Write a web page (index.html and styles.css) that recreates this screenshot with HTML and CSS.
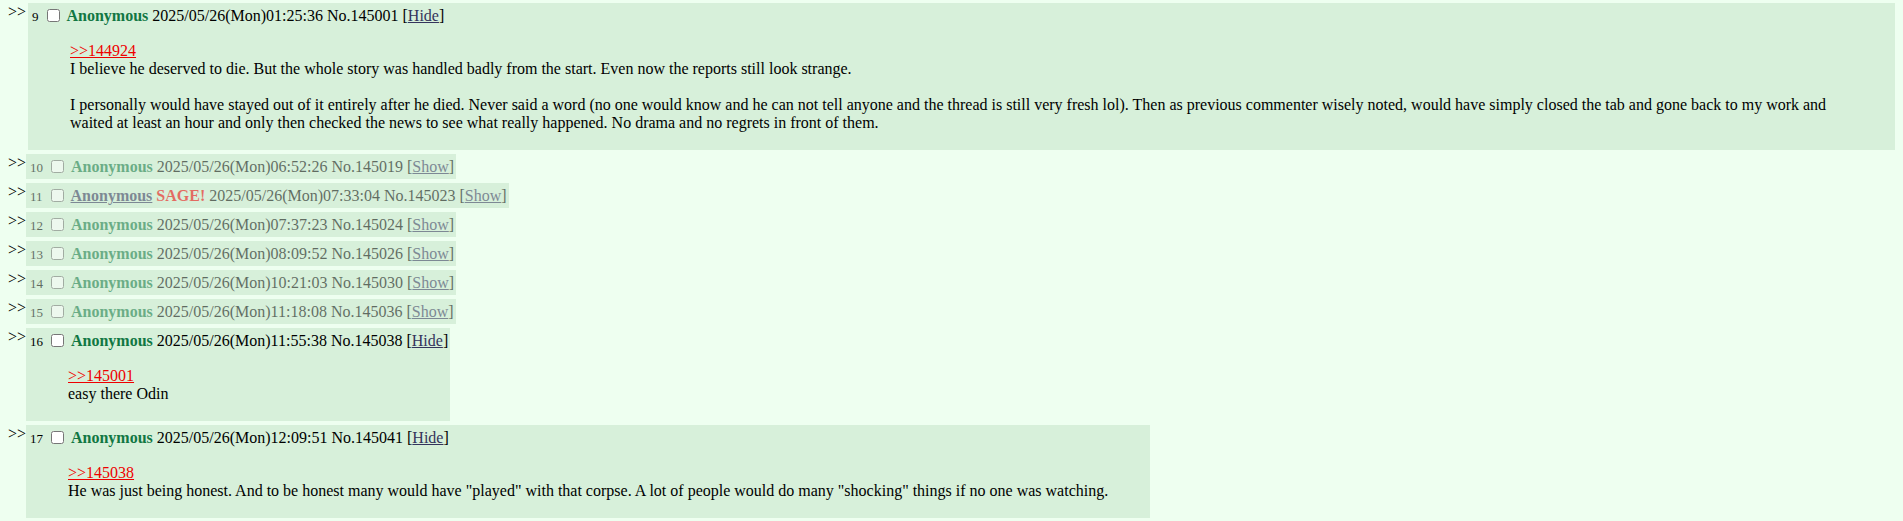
FILE: index.html
```html
<!DOCTYPE html>
<html lang="en">
<head>
    <meta charset="UTF-8">
    <title>Thread</title>
    <link rel="stylesheet" href="styles.css">
</head>
<body>
    <div class="thread">
        <div class="row first">
            <div class="mark">&gt;&gt;</div>
            <div class="reply">
                <div class="head"><span class="num">9</span> <input type="checkbox"> <span class="name">Anonymous</span> 2025/05/26(Mon)01:25:36 No.145001 [<a href="#">Hide</a>]</div>
                <blockquote>
                    <a class="quote" href="#">&gt;&gt;144924</a><br>
                    I believe he deserved to die. But the whole story was handled badly from the start. Even now the reports still look strange.<br>
                    <br>
                    I personally would have stayed out of it entirely after he died. Never said a word (no one would know and he can not tell anyone and the thread is still very fresh lol). Then as previous commenter wisely noted, would have simply closed the tab and gone back to my work
                    and waited at least an hour and only then checked the news to see what really happened. No drama and no regrets in front of them.
                </blockquote>
            </div>
        </div>
        <div class="row">
            <div class="mark">&gt;&gt;</div>
            <div class="reply hidden">
                <div class="head"><span class="num">10</span> <input type="checkbox"> <span class="name">Anonymous</span> 2025/05/26(Mon)06:52:26 No.145019 [<a href="#">Show</a>]</div>
            </div>
        </div>
        <div class="row">
            <div class="mark">&gt;&gt;</div>
            <div class="reply hidden">
                <div class="head"><span class="num">11</span> <input type="checkbox"> <a class="name mail" href="#">Anonymous</a> <span class="sage">SAGE!</span> 2025/05/26(Mon)07:33:04 No.145023 [<a href="#">Show</a>]</div>
            </div>
        </div>
        <div class="row">
            <div class="mark">&gt;&gt;</div>
            <div class="reply hidden">
                <div class="head"><span class="num">12</span> <input type="checkbox"> <span class="name">Anonymous</span> 2025/05/26(Mon)07:37:23 No.145024 [<a href="#">Show</a>]</div>
            </div>
        </div>
        <div class="row">
            <div class="mark">&gt;&gt;</div>
            <div class="reply hidden">
                <div class="head"><span class="num">13</span> <input type="checkbox"> <span class="name">Anonymous</span> 2025/05/26(Mon)08:09:52 No.145026 [<a href="#">Show</a>]</div>
            </div>
        </div>
        <div class="row">
            <div class="mark">&gt;&gt;</div>
            <div class="reply hidden">
                <div class="head"><span class="num">14</span> <input type="checkbox"> <span class="name">Anonymous</span> 2025/05/26(Mon)10:21:03 No.145030 [<a href="#">Show</a>]</div>
            </div>
        </div>
        <div class="row">
            <div class="mark">&gt;&gt;</div>
            <div class="reply hidden">
                <div class="head"><span class="num">15</span> <input type="checkbox"> <span class="name">Anonymous</span> 2025/05/26(Mon)11:18:08 No.145036 [<a href="#">Show</a>]</div>
            </div>
        </div>
        <div class="row">
            <div class="mark">&gt;&gt;</div>
            <div class="reply">
                <div class="head"><span class="num">16</span> <input type="checkbox"> <span class="name">Anonymous</span> 2025/05/26(Mon)11:55:38 No.145038 [<a href="#">Hide</a>]</div>
                <blockquote>
                    <a class="quote" href="#">&gt;&gt;145001</a><br>
                    easy there Odin
                </blockquote>
            </div>
        </div>
        <div class="row">
            <div class="mark">&gt;&gt;</div>
            <div class="reply">
                <div class="head"><span class="num">17</span> <input type="checkbox"> <span class="name">Anonymous</span> 2025/05/26(Mon)12:09:51 No.145041 [<a href="#">Hide</a>]</div>
                <blockquote>
                    <a class="quote" href="#">&gt;&gt;145038</a><br>
                    He was just being honest. And to be honest many would have "played" with that corpse. A lot of people would do many "shocking" things if no one was watching.
                </blockquote>
            </div>
        </div>
    </div>
</body>
</html>
```

FILE: styles.css
```css
body { margin: 0; padding: 3px 8px 0; background: #eefff0; color: #000; font-family: "Liberation Serif", "Times New Roman", serif; font-size: 16px; }
.row { display: flex; align-items: flex-start; gap: 2px; margin-bottom: 4px; }
.mark { flex: none; width: 16px; line-height: 18px; white-space: nowrap; }
.first .mark { width: 18px; }
.reply { background: #d7f0da; padding: 2px; }
.reply blockquote { margin: 16px 40px; line-height: 18px; }
.head { height: 21px; line-height: 21px; white-space: nowrap; }
.head input { width: 13px; height: 13px; margin: 0 3px 0 4px; vertical-align: -1px; }
.num { font-size: 13px; margin-left: 2px; }
.name { color: #117743; font-weight: bold; }
a { color: #34345c; }
a.quote { color: #e00; }
.sage { color: #e00; font-weight: bold; }
.hidden .head { opacity: 0.55; }
.hidden .mail { color: #34345c; }
```
